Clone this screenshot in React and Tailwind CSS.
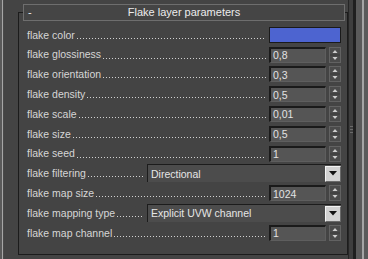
import React from "react";

const rows = [
  { label: "flake color", type: "color" },
  { label: "flake glossiness", type: "num", value: "0,8" },
  { label: "flake orientation", type: "num", value: "0,3" },
  { label: "flake density", type: "num", value: "0,5" },
  { label: "flake scale", type: "num", value: "0,01" },
  { label: "flake size", type: "num", value: "0,5" },
  { label: "flake seed", type: "num", value: "1" },
  { label: "flake filtering", type: "select", value: "Directional" },
  { label: "flake map size", type: "num", value: "1024" },
  { label: "flake mapping type", type: "select", value: "Explicit UVW channel" },
  { label: "flake map channel", type: "num", value: "1" },
];

const Spinner = () => (
  <svg width="12" height="16" viewBox="0 0 12 16" className="block shrink-0">
    <rect x="0.5" y="0.5" width="11" height="15" fill="#4b4b4b" stroke="#626262" />
    <line x1="1" y1="8" x2="11" y2="8" stroke="#3a3a3a" />
    <polygon points="3.5,6 8.5,6 6,3" fill="#cfcfcf" />
    <polygon points="3.5,10 8.5,10 6,13" fill="#cfcfcf" />
  </svg>
);

// label followed by a dotted leader, like the max rollout labels
const Leader = ({ label, width }) => (
  <div className="flex shrink-0 items-center text-[#d6d6d6]" style={{ width }}>
    <span className="whitespace-nowrap">{label}</span>
    <div className="mt-[7px] ml-[2px] h-[1px] flex-1 bg-[linear-gradient(to_right,#d2d2d2_1px,transparent_1px)] bg-[length:3px_1px]" />
  </div>
);

const NumField = ({ value }) => (
  <div className="ml-[3px] flex h-[16px] w-[57px] shrink-0 items-center border-t-2 border-l-2 border-r border-b border-t-[#1a1a1a] border-l-[#1a1a1a] border-r-[#5e5e5e] border-b-[#5e5e5e] bg-[#555555] pl-[2px] text-[#e2e2e2]">
    {value}
  </div>
);

const Select = ({ value }) => (
  <div className="ml-[3px] flex h-[18px] w-[194px] shrink-0 items-center border-t border-l border-t-[#1c1c1c] border-l-[#1c1c1c] bg-[#4c4c4c]">
    <span className="flex-1 pl-[3px] text-[#e6e6e6]">{value}</span>
    <div className="flex h-[16px] w-[16px] items-center justify-center border border-t-[#f4f4f4] border-l-[#f4f4f4] border-r-[#6a6a6a] border-b-[#6a6a6a] bg-[#d2d2d2]">
      <svg width="8" height="5" viewBox="0 0 8 5">
        <polygon points="0,0 8,0 4,4.5" fill="#111" />
      </svg>
    </div>
  </div>
);

const Row = ({ row }) => (
  <div className="flex h-[19.8px] items-center">
    {row.type === "select" ? (
      <>
        <Leader label={row.label} width={117} />
        <Select value={row.value} />
      </>
    ) : (
      <>
        <Leader label={row.label} width={239} />
        {row.type === "color" ? (
          <div className="ml-[3px] h-[16px] w-[72px] shrink-0 border border-[#1a1a1a] bg-[#4d64d0]" />
        ) : (
          <>
            <NumField value={row.value} />
            <div className="ml-[3px]">
              <Spinner />
            </div>
          </>
        )}
      </>
    )}
  </div>
);

export default function App() {
  return (
    <div
      className="flex h-[259px] w-[368px] overflow-hidden bg-[#444444] text-[10.5px] leading-none"
      style={{ fontFamily: '"Liberation Sans", Arial, sans-serif' }}
    >
      <div className="w-[2px] bg-[#5a5a5a]" />
      <div className="w-[1px] bg-[#a6a6a6]" />
      <div className="w-[1px] bg-[#4a4a4a]" />

      <div className="w-[344px] pt-[4px] pl-[14px]">
        <div className="w-[330px]">
          <div className="relative z-10 ml-[5px] grid h-[17px] w-[322px] grid-cols-[22px_1fr_22px] items-center border border-[#6e6e6e] bg-[#454545] text-[11px] text-[#ececec]">
            <span className="pl-[4px]">-</span>
            <span className="text-center">Flake layer parameters</span>
            <span />
          </div>
          <div className="-mt-[9px] h-[243px] border border-[#1c1c1c] pt-[12px] pr-[6px] pl-[8px]">
            {rows.map((row) => (
              <Row key={row.label} row={row} />
            ))}
          </div>
        </div>
      </div>

      <div className="w-[1px] bg-[#262626]" />
      <div className="flex w-[4px] flex-col items-center justify-center gap-[2px] bg-[#3e3e3e]">
        <div className="h-[1px] w-[3px] bg-[#6a6a6a]" />
        <div className="h-[1px] w-[3px] bg-[#6a6a6a]" />
        <div className="h-[1px] w-[3px] bg-[#6a6a6a]" />
      </div>
      <div className="w-[3px] bg-[#1f1f1f]" />
      <div className="w-[6px] bg-[#5a5a5a]" />
      <div className="w-[2px] bg-[#a4a4a4]" />
      <div className="w-[4px] bg-[#5a5a5a]" />
    </div>
  );
}
